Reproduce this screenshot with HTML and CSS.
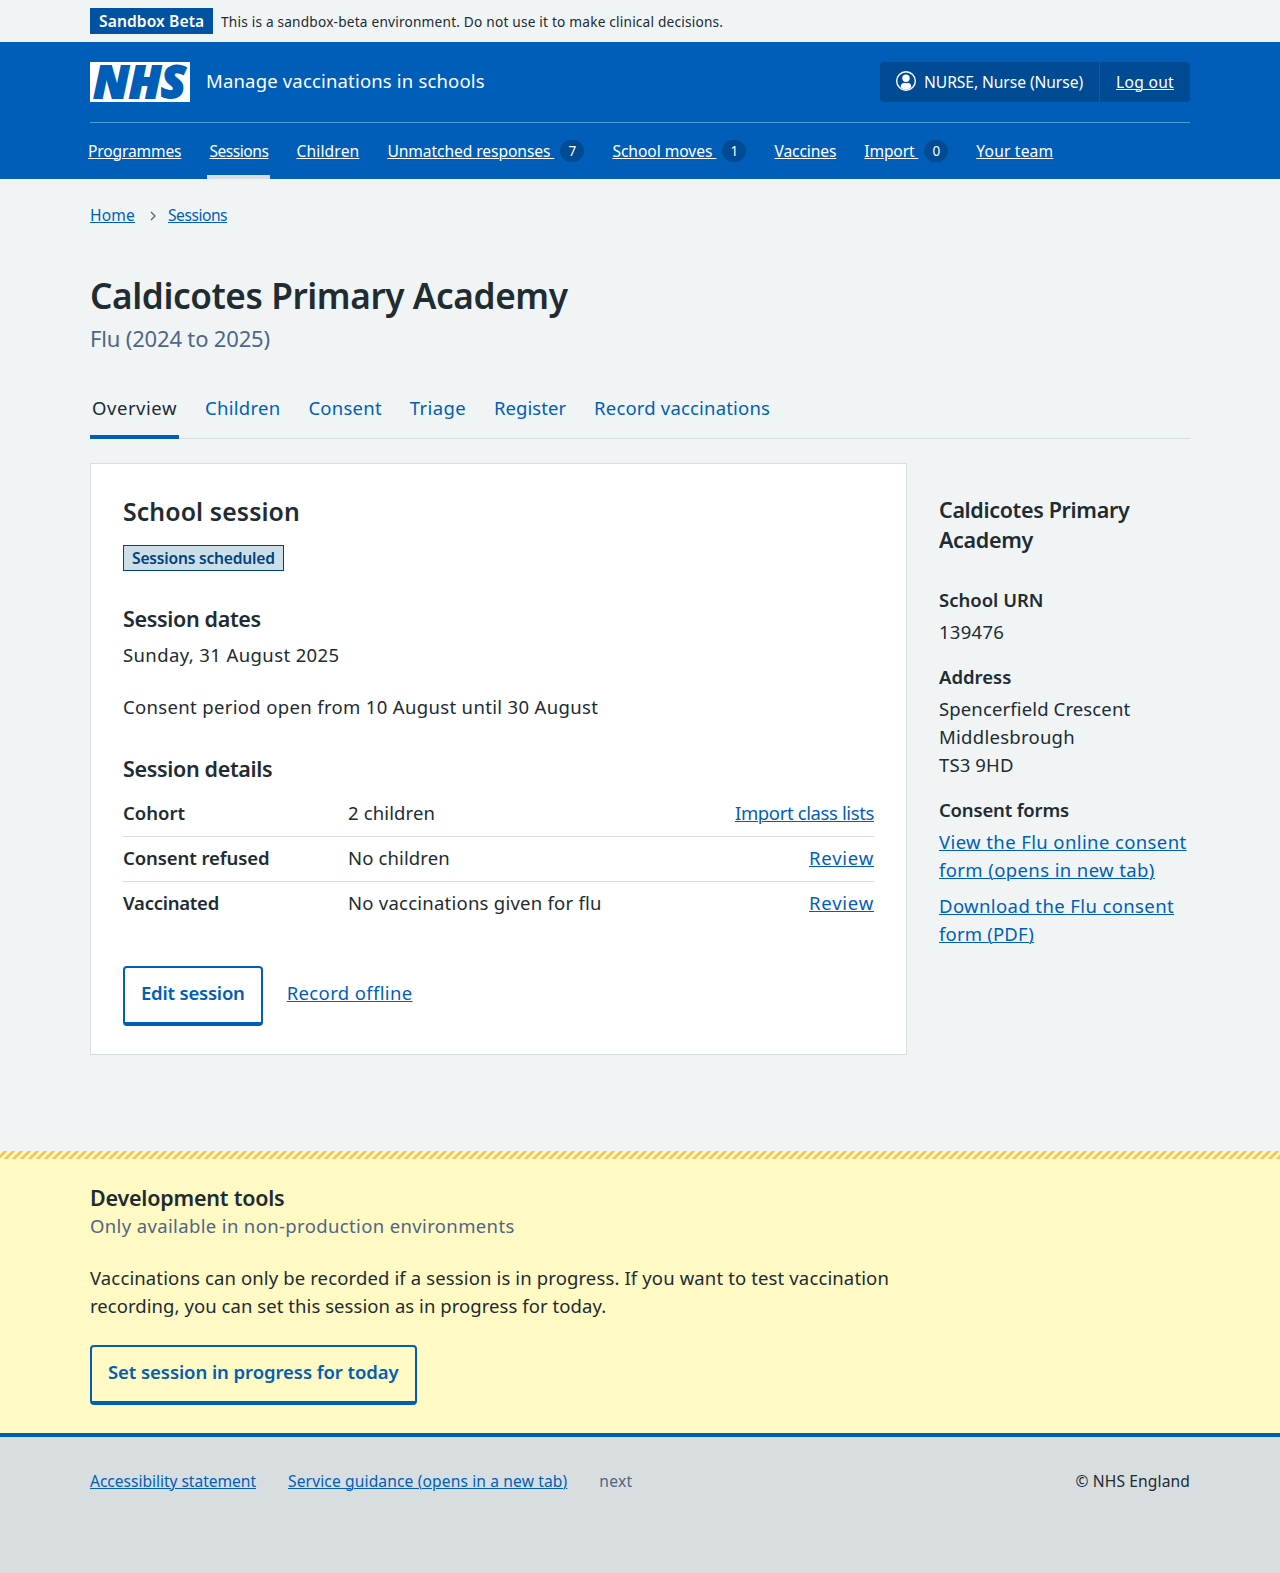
FILE: index.html
```html
<!DOCTYPE html>
<html lang="en">
<head>
<meta charset="utf-8">
<title>Caldicotes Primary Academy – Manage vaccinations in schools</title>
<link rel="stylesheet" href="styles.css">
</head>
<body>
<div class="env"><div class="container env-inner">
  <strong class="env-tag">Sandbox Beta</strong>
  <span class="env-text">This is a sandbox-beta environment. Do not use it to make clinical decisions.</span>
</div></div>
<header class="header"><div class="container">
  <div class="header-top">
    <a class="logo" href="#"><svg width="100" height="40" viewBox="0 0 100 40" role="img" aria-label="NHS"><path fill="#fff" d="M0 0h100v40H0z"/><text class="logo-text" x="3.500" y="35.500" textLength="92" lengthAdjust="spacingAndGlyphs">NHS</text></svg></a>
    <a class="service" href="#">Manage vaccinations in schools</a>
    <div class="account">
      <div class="account-user"><svg width="20" height="20" viewBox="0 0 20 20" aria-hidden="true"><circle cx="10" cy="10" r="9.3" fill="none" stroke="#fff" stroke-width="1.4"/><circle cx="10" cy="7.3" r="3.7" fill="#fff"/><path fill="#fff" d="M4.700 16.200c0-2.600 1.400-4.100 3.300-4.100h4c1.900 0 3.300 1.500 3.300 4.100-1.500 1.500-3.300 2.300-5.300 2.300s-3.800-.8-5.300-2.300z"/></svg><span>NURSE, Nurse (Nurse)</span></div>
      <a class="account-out" href="#">Log out</a>
    </div>
  </div>
  <nav class="nav">
    <a class="track-n15" href="#">Programmes</a>
    <a class="current track-n48" href="#">Sessions</a>
    <a class="track-16" href="#">Children</a>
    <a href="#"><span class="lbl track-n07">Unmatched responses&nbsp;</span><span class="count">7</span></a>
    <a href="#"><span class="lbl track-n04">School moves&nbsp;</span><span class="count">1</span></a>
    <a class="track-n10" href="#">Vaccines</a>
    <a href="#"><span class="lbl track-n15">Import&nbsp;</span><span class="count">0</span></a>
    <a class="track-18" href="#">Your team</a>
  </nav>
</div></header>
<main class="container main">
  <nav class="crumbs"><a class="track-16" href="#">Home</a><svg width="6" height="10" viewBox="0 0 6 10" aria-hidden="true"><path d="M1 1l4 4-4 4" fill="none" stroke="#4c6272" stroke-width="1.300"/></svg><a class="track-n48" href="#">Sessions</a></nav>
  <h1>Caldicotes Primary Academy</h1>
  <p class="caption">Flu (2024 to 2025)</p>
  <nav class="tabs">
    <a class="active track-54" href="#">Overview</a>
    <a class="track-27" href="#">Children</a>
    <a class="track-24" href="#">Consent</a>
    <a class="track-36" href="#">Triage</a>
    <a class="track-06" href="#">Register</a>
    <a class="track-18" href="#">Record vaccinations</a>
  </nav>
  <div class="columns">
    <section class="card">
      <h2>School session</h2>
      <strong class="tag">Sessions scheduled</strong>
      <h3 class="dates">Session dates</h3>
      <p class="date track-39">Sunday, 31 August 2025</p>
      <p class="period track-34">Consent period open from 10 August until 30 August</p>
      <h3 class="details">Session details</h3>
      <dl class="summary">
        <div><dt class="track-0">Cohort</dt><dd>2 children</dd><dd><a class="track-n38" href="#">Import class lists</a></dd></div>
        <div><dt>Consent refused</dt><dd>No children</dd><dd><a class="track-77" href="#">Review</a></dd></div>
        <div><dt class="track-n25">Vaccinated</dt><dd class="track-24">No vaccinations given for flu</dd><dd><a class="track-77" href="#">Review</a></dd></div>
      </dl>
      <div class="actions"><a class="button track-n20" href="#">Edit session</a><a class="track-36" href="#">Record offline</a></div>
    </section>
    <aside class="side">
      <h3>Caldicotes Primary Academy</h3>
      <dl class="facts">
        <dt>School URN</dt><dd class="track-27">139476</dd>
        <dt>Address</dt><dd>Spencerfield Crescent<br><span class="track-27">Middlesbrough</span><br>TS3 9HD</dd>
        <dt class="track-n18">Consent forms</dt><dd class="track-39"><a href="#">View the Flu online consent form (opens in new tab)</a><a href="#">Download the Flu consent <span class="track-18">form (PDF)</span></a></dd>
      </dl>
    </aside>
  </div>
</main>
<section class="dev"><div class="container">
  <h3>Development tools</h3>
  <p class="dev-note track-36">Only available in non-production environments</p>
  <p class="dev-text">Vaccinations can only be recorded if a session is in progress. If you want to test vaccination <span class="track-06">recording, you can set this session as in progress for today.</span></p>
  <a class="button track-n07" href="#">Set session in progress for today</a>
</div></section>
<footer class="footer"><div class="container footer-inner">
  <a class="track-n04" href="#">Accessibility statement</a><a class="track-12" href="#">Service guidance (opens in a new tab)</a><span class="ref track-24">next</span><span class="copy">© NHS England</span>
</div></footer>
</body>
</html>
```
FILE: styles.css
```css
* { box-sizing: border-box; }
body {
  margin: 0;
  background: #f0f4f5;
  color: #212b32;
  font: 18.5px/28px "Noto Sans", "Open Sans", sans-serif;
  letter-spacing: .13px;
}
h1, h2, h3, p, dl, dt, dd { margin: 0; }
a { color: #005eb8; text-decoration: underline; text-decoration-thickness: 1px; text-underline-offset: 1px; }
h1, h2, h3, dt, strong { font-weight: 600; }
.container { width: 1100px; margin: 0 auto; }

.env { height: 42px; padding-top: 8px; }
.env-inner { display: flex; gap: 8px; align-items: center; }
.env-tag { width: 123px; height: 26px; padding-left: 9px; background: #0053a2; color: #fff; font-size: 15.6px; line-height: 27px; letter-spacing: .1px; }
.env-text { padding-top: 2px; font-size: 13.7px; line-height: 24px; letter-spacing: .19px; }

.header { height: 137px; background: #005eb8; color: #fff; }
.header a { color: #fff; }
.header-top { display: flex; align-items: center; height: 81px; padding: 20px 0; border-bottom: 1px solid #4ca0d6; }
.logo { display: flex; }
.logo svg { overflow: visible; }
.logo-text { fill: #005eb8; stroke: #005eb8; stroke-width: 1.8; letter-spacing: 0; font: italic 800 44.5px "Open Sans", "Noto Sans", sans-serif; }
.header .service { margin: -2px 0 0 16px; text-decoration: none; letter-spacing: .17px; }
.account { display: flex; height: 40px; margin-left: auto; border-radius: 4px; background: #004b93; font-size: 15.6px; line-height: 40px; letter-spacing: -.06px; }
.account-user { display: flex; align-items: center; gap: 8px; width: 220px; padding-left: 16px; border-right: 1px solid #005eb8; }
.account-user svg { margin-top: -2px; }
.account-out { padding-left: 16px; width: 90px; letter-spacing: .29px; }
.nav { display: flex; gap: 24px; height: 56px; margin-left: -4px; font-size: 15.6px; line-height: 56px; }
.nav a { padding: 0 2px; text-decoration: none; }
.nav a, .lbl { white-space: nowrap; }
.nav a:not(:has(.lbl)), .lbl { text-decoration: underline; text-decoration-thickness: 1px; text-underline-offset: 1px; }
.nav a:has(.lbl) { display: flex; align-items: center; gap: 6px; }
.nav .current { box-shadow: inset 0 -4px #d8dde0; }
.count { width: 24px; height: 22px; margin-top: -1px; border-radius: 11px; background: #004b93; font-size: 13.5px; line-height: 23px; text-align: center; }

.main { height: 972px; padding-top: 22px; }
.crumbs { display: flex; align-items: center; height: 28px; font-size: 15.6px; }
.crumbs svg { margin: 2px 12px 0 15px; }
h1 { margin-top: 42px; font-size: 35.2px; line-height: 48px; letter-spacing: -.41px; }
.caption { margin-top: 3px; color: #4f6685; font-size: 22px; line-height: 32px; letter-spacing: -.17px; }
.tabs { display: flex; gap: 24px; height: 55px; margin-top: 30px; border-bottom: 1px solid #d8dde0; line-height: 48px; }
.tabs a { height: 55px; padding: 0 2px; text-decoration: none; }
.tabs .active { color: #212b32; box-shadow: inset 0 -4px #005eb8; }
.columns { display: grid; grid-template-columns: 817px 251px; gap: 32px; margin-top: 24px; }

.card { height: 592px; padding: 31px 32px; border: 1px solid #d8dde0; background: #fff; }
h2 { font-size: 24.8px; line-height: 32px; letter-spacing: .12px; }
.tag { display: block; width: 161px; height: 26px; margin-top: 18px; padding-left: 8px; border: 1px solid #004281; background: #ccdfe8; color: #004281; font-size: 15.6px; line-height: 24px; letter-spacing: -.2px; }
h3 { font-size: 21.5px; line-height: 30px; letter-spacing: -.34px; }
.dates { margin-top: 33px; }
.date { margin-top: 7px; }
.period { margin-top: 24px; }
.details { margin-top: 33px; }
.summary { margin-top: 8px; }
.summary div { display: grid; grid-template-columns: 225px 1fr auto; height: 45px; padding-top: 7px; border-bottom: 1px solid #d8dde0; }
.summary div:last-child { border-bottom: 0; }
.summary dt { letter-spacing: -.08px; }
.actions { display: flex; align-items: flex-start; gap: 24px; margin-top: 39px; line-height: 54px; }
.button { display: inline-block; height: 60px; padding: 11px 16px 0; border: 2px solid #005eb8; border-bottom-width: 4px; border-radius: 4px; line-height: 28px; font-weight: 600; text-decoration: none; }

.side { padding-top: 32px; }
.facts { margin-top: 31px; }
.facts dt { margin-bottom: 4px; letter-spacing: 0; }
.facts dd { margin-bottom: 17px; }
.facts a { display: block; margin-bottom: 8px; }

.dev { height: 282px; padding-top: 32px; background: repeating-linear-gradient(-45deg, #f7c55b 0 2.828px, #fff9c4 2.828px 5.657px) 0 0 / 100% 8px no-repeat #fff9c4; }
.dev h3 { letter-spacing: -.22px; }
.dev-note { margin-top: -1px; color: #4f6685; }
.dev-text { width: 817px; margin: 24px 0 25px; }
.dev .button { background: #fff9c4; }

.footer { height: 140px; border-top: 4px solid #005eb8; background: #d8dde0; }
.footer-inner { display: flex; gap: 32px; padding-top: 30px; font-size: 15.6px; }
.ref { color: #4f6685; }
.copy { margin-left: auto; letter-spacing: .12px; }

/* Tracking, in hundredths of a pixel (n = negative) */
.track-n48 { letter-spacing: -.48px; }
.track-n38 { letter-spacing: -.38px; }
.summary .track-n25 { letter-spacing: -.25px; }
.track-n20 { letter-spacing: -.2px; }
.facts .track-n18 { letter-spacing: -.18px; }
.track-n15 { letter-spacing: -.15px; }
.track-n10 { letter-spacing: -.1px; }
.track-n07 { letter-spacing: -.07px; }
.track-n04 { letter-spacing: -.04px; }
.summary .track-0 { letter-spacing: 0; }
.track-06 { letter-spacing: .06px; }
.track-12 { letter-spacing: .12px; }
.track-16 { letter-spacing: .16px; }
.track-18 { letter-spacing: .18px; }
.track-24 { letter-spacing: .24px; }
.track-27 { letter-spacing: .27px; }
.track-34 { letter-spacing: .34px; }
.track-36 { letter-spacing: .36px; }
.track-39 { letter-spacing: .39px; }
.track-54 { letter-spacing: .54px; }
.track-77 { letter-spacing: .77px; }
```
